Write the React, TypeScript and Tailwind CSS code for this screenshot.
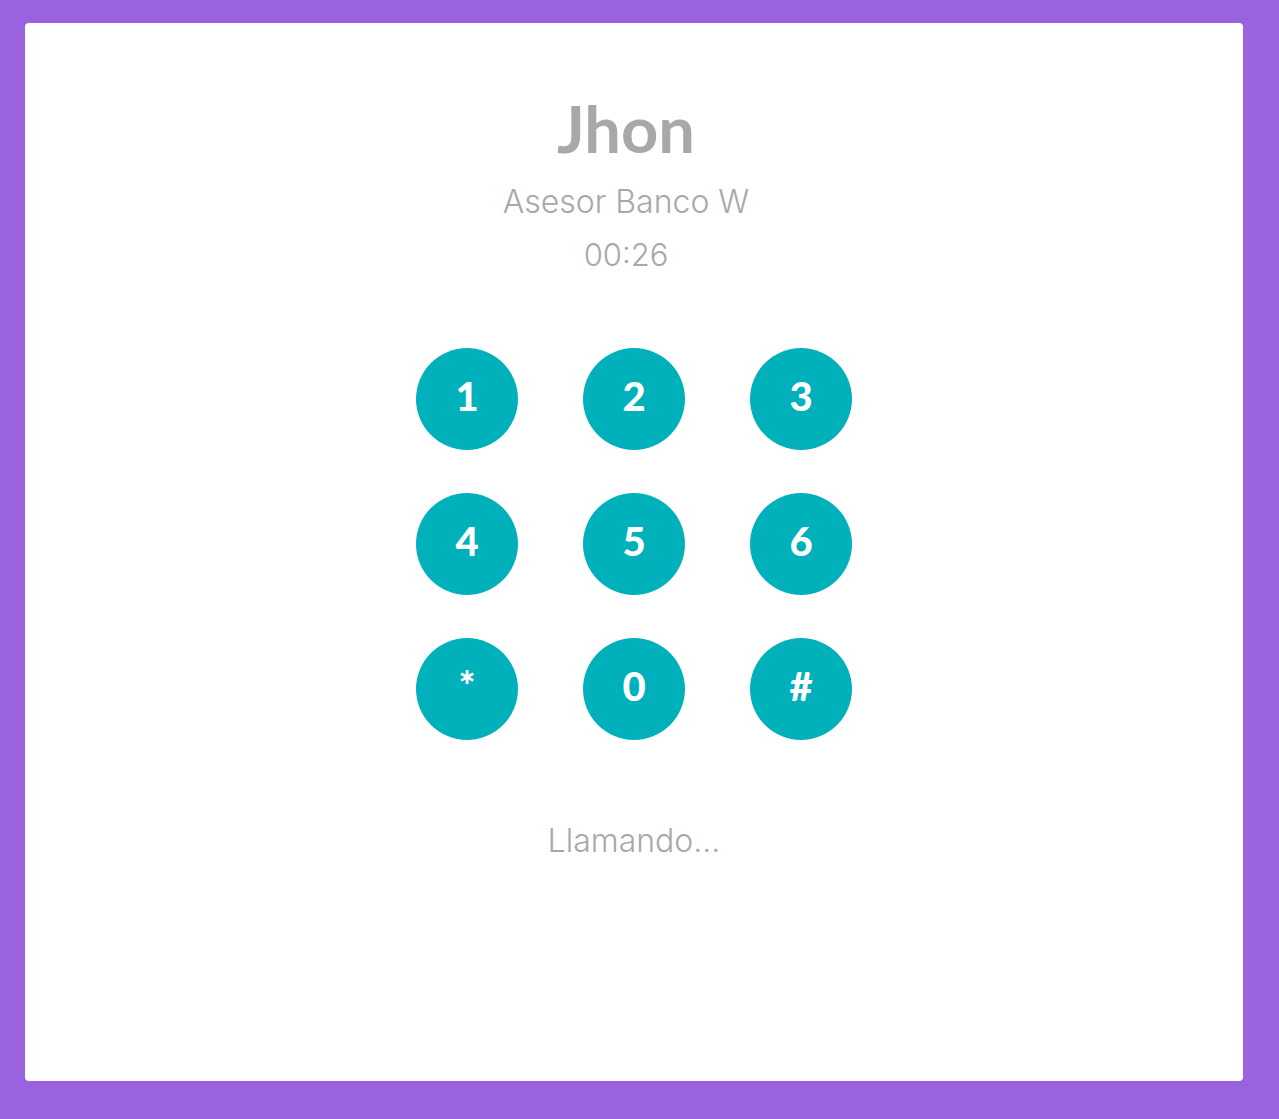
import React from "react";

const keys = ["1", "2", "3", "4", "5", "6", "*", "0", "#"];

export default function App() {
  return (
    <div className="min-h-[1119px] w-[1279px] bg-[#9a62df] pl-[25px] pr-[36px] pt-[23px] pb-[38px] font-['Lato',sans-serif]">
      <div className="flex h-[1058px] flex-col items-center rounded-[4px] bg-white pt-[73px]">
        {/* CALLER */}
        <h1 className="mr-[16px] text-[65px] font-bold leading-[64px] text-[#a8a8a8]">
          Jhon
        </h1>
        <p className="mr-[16px] mt-[26px] font-['Inter',sans-serif] text-[32px] font-light leading-[32px] text-[#a8a8a8]">
          Asesor Banco W
        </p>
        <p className="mr-[16px] mt-[21px] font-['Inter',sans-serif] text-[31px] font-light leading-[32px] text-[#a8a8a8]">
          00:26
        </p>

        {/* KEYPAD */}
        <div className="mt-[77px] grid grid-cols-[repeat(3,102px)] gap-x-[65px] gap-y-[43px]">
          {keys.map((k) => (
            <button
              key={k}
              className="flex h-[102px] w-[102px] items-center justify-center rounded-full bg-[#00b1bb] pb-[6px] text-[40px] font-black leading-none text-white"
            >
              {k}
            </button>
          ))}
        </div>

        {/* STATUS */}
        <p className="mt-[85px] font-['Inter',sans-serif] text-[32px] font-light leading-[32px] text-[#a8a8a8]">
          Llamando...
        </p>
      </div>
    </div>
  );
}
